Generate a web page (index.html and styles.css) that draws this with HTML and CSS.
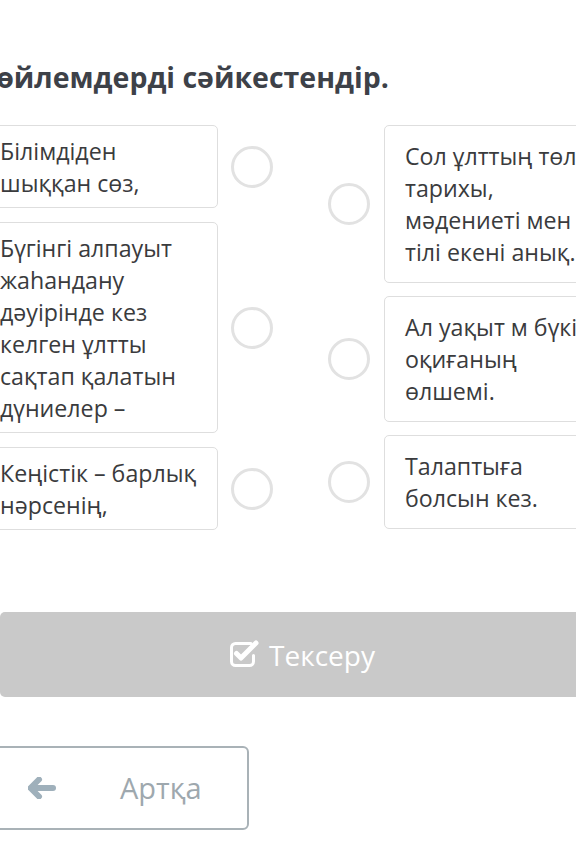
FILE: index.html
```html
<!DOCTYPE html>
<html lang="kk">
<head>
<meta charset="utf-8">
<title>Сөйлемдерді сәйкестендір</title>
<link rel="stylesheet" href="styles.css">
</head>
<body>
<div class="page">
  <h1 class="title">Сөйлемдерді сәйкестендір.</h1>
  <div class="board">
    <div class="col col-left">
      <div class="item">
        <div class="card card-left">Білімдіден<br>шыққан сөз,</div>
        <span class="dot"></span>
      </div>
      <div class="item">
        <div class="card card-left">Бүгінгі алпауыт<br>жаһандану<br>дәуірінде кез<br>келген ұлтты<br>сақтап қалатын<br>дүниелер –</div>
        <span class="dot"></span>
      </div>
      <div class="item">
        <div class="card card-left">Кеңістік – барлық<br>нәрсенің,</div>
        <span class="dot"></span>
      </div>
    </div>
    <div class="col col-right">
      <div class="item">
        <span class="dot"></span>
        <div class="card card-right">Сол ұлттың төлі<br>тарихы,<br>мәдениеті мен<br>тілі екені анық.</div>
      </div>
      <div class="item">
        <span class="dot"></span>
        <div class="card card-right">Ал уақыт м бүкіл<br>оқиғаның<br>өлшемі.</div>
      </div>
      <div class="item">
        <span class="dot"></span>
        <div class="card card-right">Талаптыға<br>болсын кез.</div>
      </div>
    </div>
  </div>
  <div class="check-btn">
    <svg class="check-icon" viewBox="0 0 30 28" width="30" height="28" aria-hidden="true">
      <path d="M22 3.5H6.5a4 4 0 0 0-4 4v14a4 4 0 0 0 4 4h14a4 4 0 0 0 4-4v-6" fill="none" stroke="#fff" stroke-width="3" stroke-linecap="round"/>
      <path d="M7.5 13.5l4.5 4.5 L27 3" fill="none" stroke="#fff" stroke-width="5" stroke-linejoin="round" stroke-linecap="round"/>
    </svg>
    <span class="check-label">Тексеру</span>
  </div>
  <div class="back-btn">
    <svg class="back-icon" viewBox="0 0 28 22" width="28" height="22" aria-hidden="true">
      <path d="M11 2.5 L2.5 11 L11 19.5" fill="none" stroke="#9fb0bb" stroke-width="6" stroke-linecap="round" stroke-linejoin="round"/>
      <path d="M4 11 H25" fill="none" stroke="#9fb0bb" stroke-width="6" stroke-linecap="round"/>
    </svg>
    <span class="back-label">Артқа</span>
  </div>
</div>
</body>
</html>
```
FILE: styles.css
```css
html, body {
  margin: 0;
  padding: 0;
  background: #fff;
}
body {
  width: 576px;
  height: 859px;
  overflow: hidden;
  font-family: "Open Sans", "Noto Sans", sans-serif;
  color: #3b3d40;
}
.page {
  margin-left: -11px;
  width: 640px;
}
.title {
  margin: 59px 0 0 -11px;
  font-size: 28.5px;
  line-height: 36px;
  font-weight: 700;
  color: #3d4148;
  white-space: nowrap;
}
.board {
  display: flex;
  align-items: flex-start;
  gap: 55px;
  margin-top: 30px;
}
.col {
  display: flex;
  flex-direction: column;
}
.col-left { gap: 14px; }
.col-right { gap: 13px; }
.item {
  display: flex;
  align-items: center;
  gap: 13px;
}
.col-right .item { gap: 14px; }
.card {
  border: 1px solid #dedede;
  border-radius: 5px;
  font-size: 23.2px;
  line-height: 32px;
  color: #3a3b3d;
  white-space: nowrap;
  background: #fff;
}
.card-left {
  width: 207px;
  padding: 9px 10px 8px 10px;
  overflow: hidden;
}
.card-right {
  width: 220px;
  padding: 14px 20px;
  overflow: hidden;
}
.dot {
  flex: none;
  width: 36px;
  height: 36px;
  border: 3px solid #e2e2e2;
  border-radius: 50%;
}
.check-btn {
  margin: 82px 0 0 11px;
  width: 604px;
  height: 85px;
  background: #c9c9c9;
  border-radius: 5px;
  display: flex;
  align-items: center;
  justify-content: center;
  gap: 10px;
  color: #fff;
}
.check-icon { flex: none; margin-top: -2px; }
.check-label {
  font-size: 28px;
  line-height: 36px;
}
.back-btn {
  margin-top: 49px;
  width: 219px;
  height: 80px;
  border: 2px solid #a9b2b7;
  border-radius: 6px;
  display: flex;
  align-items: center;
  padding-left: 37px;
  box-sizing: content-box;
}
.back-icon { flex: none; }
.back-label {
  margin-left: 64px;
  font-size: 29px;
  line-height: 36px;
  color: #9ea8ae;
}
```
